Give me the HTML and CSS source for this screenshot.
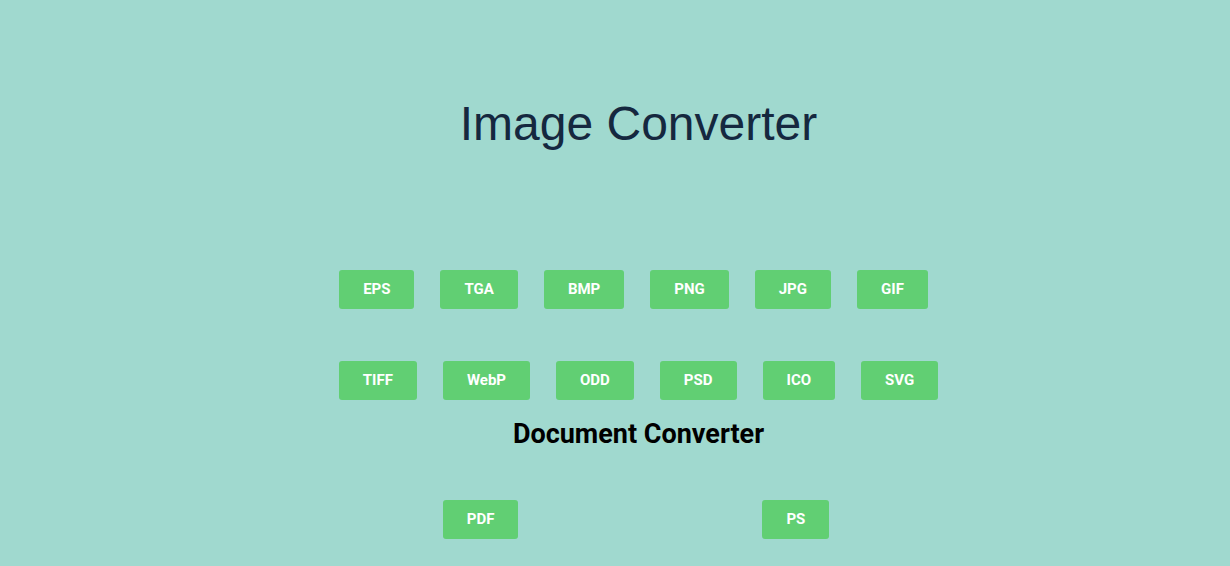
FILE: index.html
```html
<!DOCTYPE html>
<html lang="en">
<head>
<meta charset="utf-8">
<title>Image Converter</title>
<link rel="stylesheet" href="styles.css">
</head>
<body>
<main class="page">
  <h1 class="title">Image Converter</h1>
  <div class="row row-first">
    <a class="btn" href="#">EPS</a>
    <a class="btn" href="#">TGA</a>
    <a class="btn" href="#">BMP</a>
    <a class="btn" href="#">PNG</a>
    <a class="btn" href="#">JPG</a>
    <a class="btn" href="#">GIF</a>
  </div>
  <div class="row row-second">
    <a class="btn" href="#">TIFF</a>
    <a class="btn" href="#">WebP</a>
    <a class="btn" href="#">ODD</a>
    <a class="btn" href="#">PSD</a>
    <a class="btn" href="#">ICO</a>
    <a class="btn" href="#">SVG</a>
  </div>
  <h2 class="subtitle">Document Converter</h2>
  <div class="row row-docs">
    <a class="btn" href="#">PDF</a>
    <a class="btn" href="#">PS</a>
  </div>
</main>
</body>
</html>
```

FILE: styles.css
```css
html, body {
  margin: 0;
  padding: 0;
  background: #a0d9cf;
}
body {
  font-family: Roboto, "Liberation Sans", Arial, sans-serif;
  min-height: 566px;
}
.page {
  display: flex;
  flex-direction: column;
  align-items: center;
  padding-left: 47px;
}
.title {
  margin: 96px 0 0;
  font-family: "Liberation Sans", Arial, sans-serif;
  font-weight: 400;
  font-size: 48px;
  line-height: 56px;
  color: #15283f;
}
.row {
  display: flex;
  gap: 26px;
}
.row-first {
  margin-top: 118px;
  margin-right: 10px;
}
.row-second {
  margin-top: 52px;
}
.row-docs {
  margin-top: 50px;
  margin-right: 5px;
  gap: 244px;
}
.btn {
  display: block;
  padding: 11px 24px;
  line-height: 17px;
  font-size: 15px;
  font-weight: 700;
  color: #ffffff;
  background: #61cf73;
  border-radius: 3px;
  text-decoration: none;
}
.subtitle {
  margin: 18px 0 0;
  font-size: 27px;
  line-height: 32px;
  font-weight: 700;
  color: #000000;
}
```
